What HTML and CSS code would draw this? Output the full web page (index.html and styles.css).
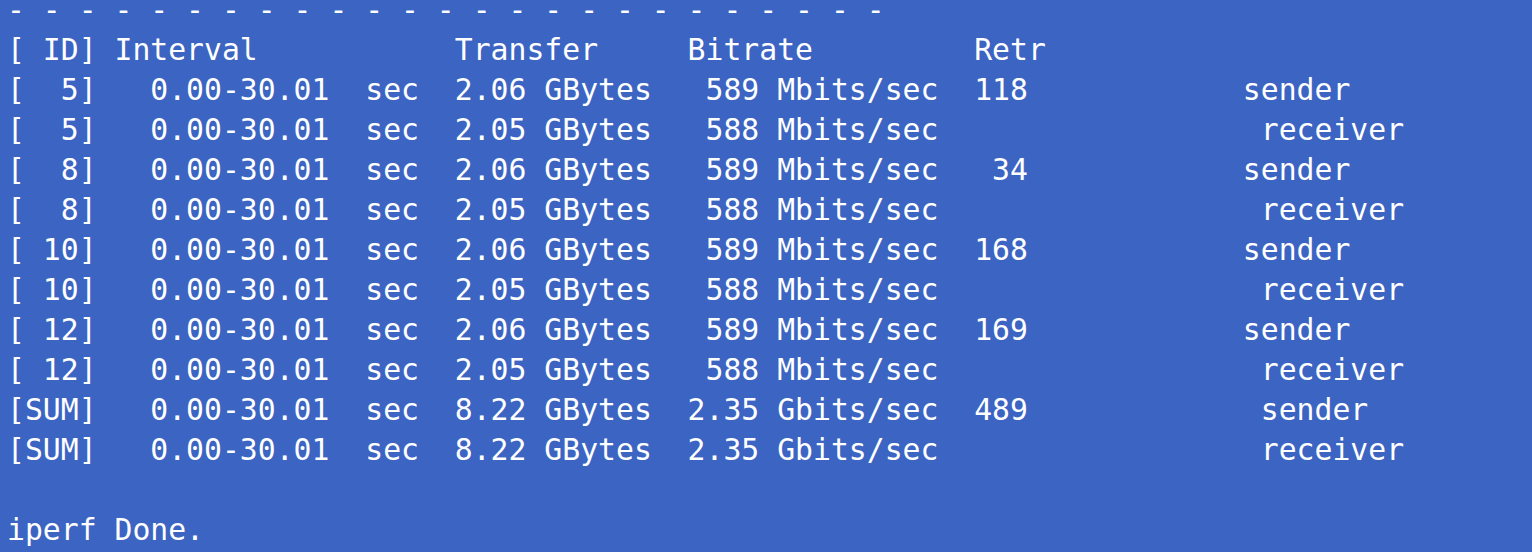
FILE: index.html
```html
<!DOCTYPE html>
<html>
<head>
<meta charset="utf-8">
<link rel="stylesheet" href="styles.css">
</head>
<body>
<pre class="term">- - - - - - - - - - - - - - - - - - - - - - - - -
[ ID] Interval           Transfer     Bitrate         Retr
[  5]   0.00-30.01  sec  2.06 GBytes   589 Mbits/sec  118            sender
[  5]   0.00-30.01  sec  2.05 GBytes   588 Mbits/sec                  receiver
[  8]   0.00-30.01  sec  2.06 GBytes   589 Mbits/sec   34            sender
[  8]   0.00-30.01  sec  2.05 GBytes   588 Mbits/sec                  receiver
[ 10]   0.00-30.01  sec  2.06 GBytes   589 Mbits/sec  168            sender
[ 10]   0.00-30.01  sec  2.05 GBytes   588 Mbits/sec                  receiver
[ 12]   0.00-30.01  sec  2.06 GBytes   589 Mbits/sec  169            sender
[ 12]   0.00-30.01  sec  2.05 GBytes   588 Mbits/sec                  receiver
[SUM]   0.00-30.01  sec  8.22 GBytes  2.35 Gbits/sec  489             sender
[SUM]   0.00-30.01  sec  8.22 GBytes  2.35 Gbits/sec                  receiver

iperf Done.</pre>
</body>
</html>
```
FILE: styles.css
```css
html, body {
  margin: 0;
  padding: 0;
  background: #3b64c3;
  overflow: hidden;
}
.term {
  margin: -10px 0 0 0;
  padding: 0 0 0 7px;
  font-family: "DejaVu Sans Mono", monospace;
  font-size: 29.75px;
  line-height: 40px;
  color: #ffffff;
  white-space: pre;
}
```
